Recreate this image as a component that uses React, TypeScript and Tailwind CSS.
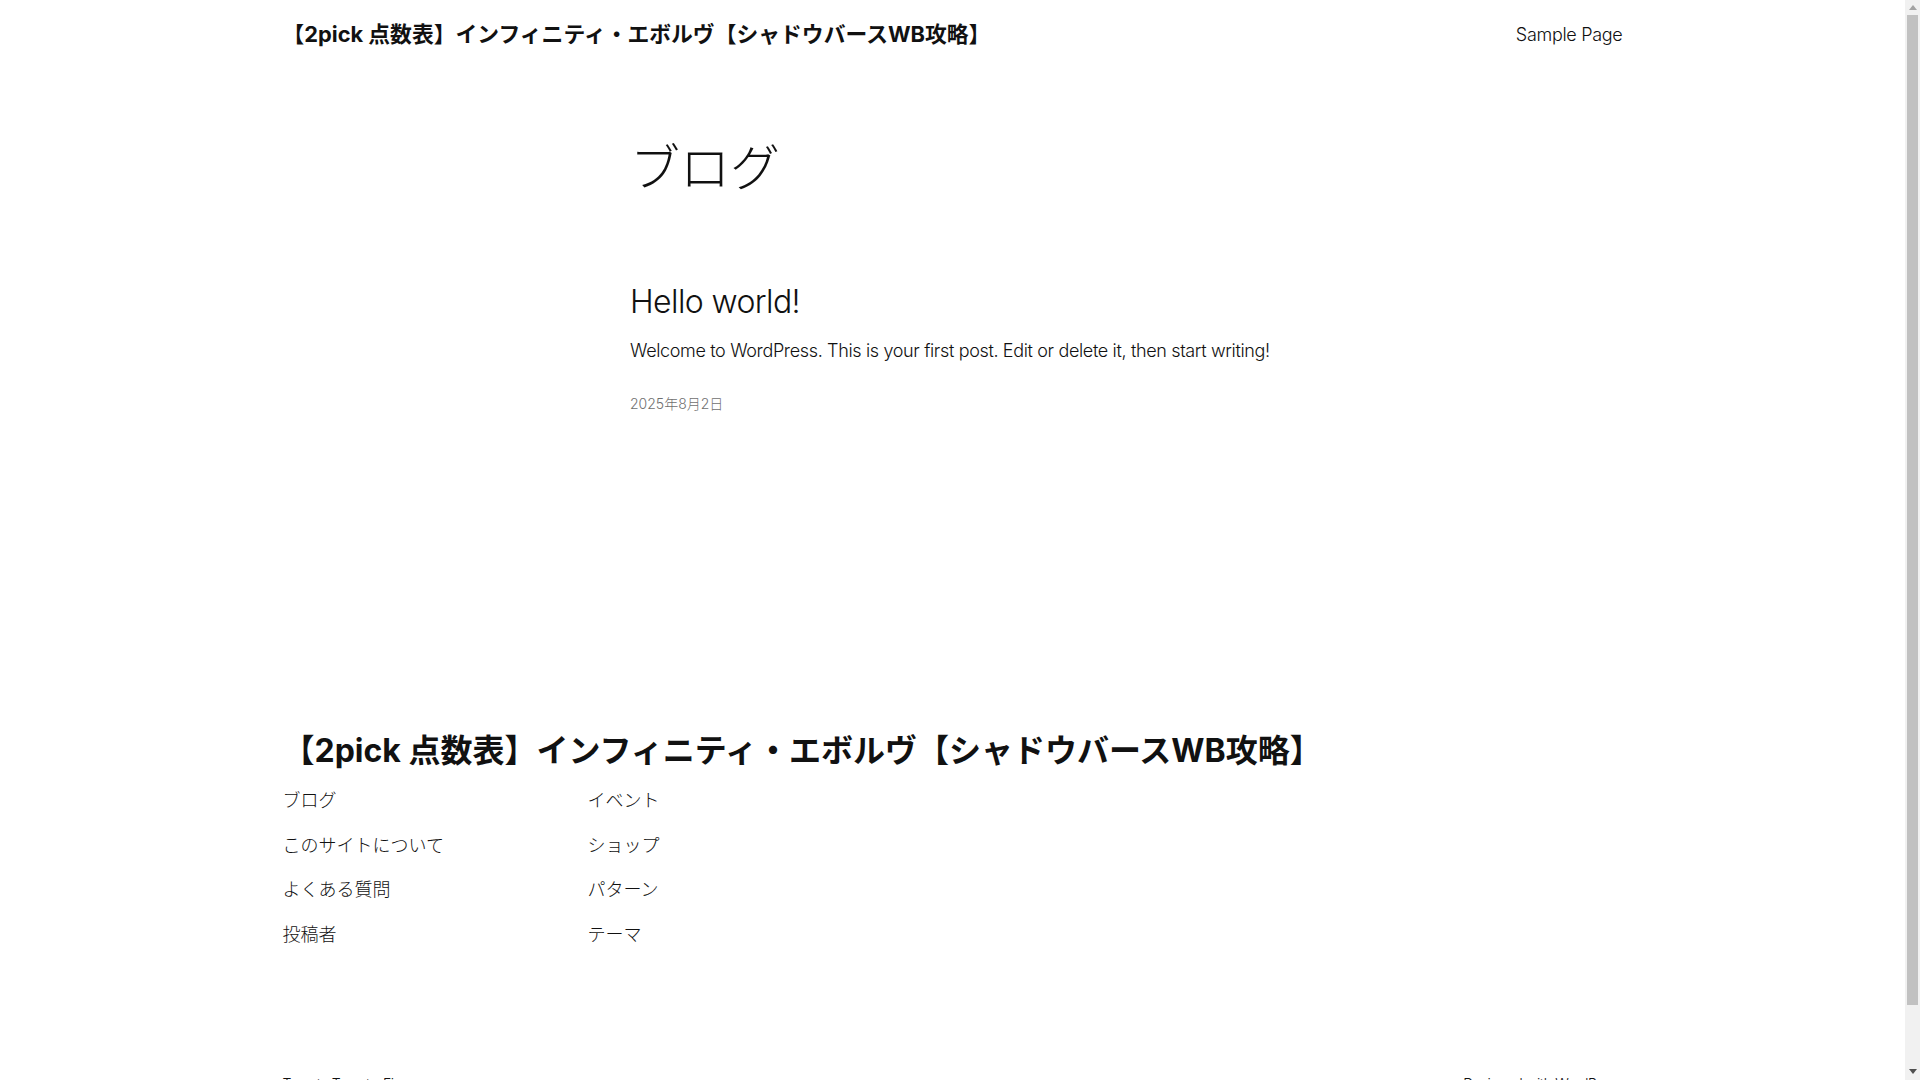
const siteTitle = '【2pick 点数表】インフィニティ・エボルヴ【シャドウバースWB攻略】';

const footerLinksLeft = ['ブログ', 'このサイトについて', 'よくある質問', '投稿者'];
const footerLinksRight = ['イベント', 'ショップ', 'パターン', 'テーマ'];

function Scrollbar() {
  return (
    <div className="flex w-[15px] shrink-0 flex-col items-center bg-[#f1f1f1]">
      <svg className="mt-[5px]" width="8" height="5" viewBox="0 0 8 5">
        <path d="M0 5 L4 0 L8 5 Z" fill="#a3a3a3" />
      </svg>
      <div className="mt-[5px] h-[990px] w-[11px] bg-[#c1c1c1]" />
      <div className="flex-1" />
      <svg className="mb-[6px]" width="8" height="5" viewBox="0 0 8 5">
        <path d="M0 0 L8 0 L4 5 Z" fill="#505050" />
      </svg>
    </div>
  );
}

export default function App() {
  return (
    <div className="flex h-screen overflow-hidden bg-white text-[#111111] font-['Inter','Noto_Sans_CJK_JP',sans-serif]">
      <div className="min-w-0 flex-1">
        {/* header */}
        <header className="mx-auto flex h-[68px] w-[1340px] items-center justify-between">
          <a href="#" className="text-[21.8px] font-bold">
            {siteTitle}
          </a>
          <nav className="text-[18px] font-light tracking-[-0.3px]">
            <a href="#">Sample Page</a>
          </nav>
        </header>

        {/* main */}
        <main className="mx-auto w-[645px] pt-[70px]">
          <h1 className="text-[50px] font-light leading-[1.2]">ブログ</h1>

          <article className="mt-[85px]">
            <h2 className="text-[32px] font-light leading-[1.2] tracking-[-0.6px]">
              <a href="#">Hello world!</a>
            </h2>
            <p className="mt-[16px] text-[18px] font-light leading-[1.6] tracking-[-0.35px]">
              Welcome to WordPress. This is your first post. Edit or delete it, then start writing!
            </p>
            <div className="mt-[28px] text-[14px] font-light leading-[1.4] text-[#6f6f6f]">
              2025年8月2日
            </div>
          </article>
        </main>

        {/* footer */}
        <footer className="mx-auto w-[1340px] pt-[318px] pb-[80px]">
          <div className="text-[32px] font-bold leading-[1.2]">{siteTitle}</div>

          <div className="mt-[17px] flex">
            <ul className="flex w-[305px] flex-col gap-[15.7px] text-[18px] font-light leading-[1.6]">
              {footerLinksLeft.map((l) => (
                <li key={l}>
                  <a href="#">{l}</a>
                </li>
              ))}
            </ul>
            <ul className="flex flex-col gap-[15.7px] text-[18px] font-light leading-[1.6]">
              {footerLinksRight.map((l) => (
                <li key={l}>
                  <a href="#">{l}</a>
                </li>
              ))}
            </ul>
          </div>

          <div className="mt-[125px] flex items-center justify-between text-[14px] font-light leading-[1.4] tracking-[-0.35px]">
            <span>Twenty Twenty-Five</span>
            <span>
              Designed with <a href="#">WordPress</a>
            </span>
          </div>
        </footer>
      </div>
      <Scrollbar />
    </div>
  );
}
